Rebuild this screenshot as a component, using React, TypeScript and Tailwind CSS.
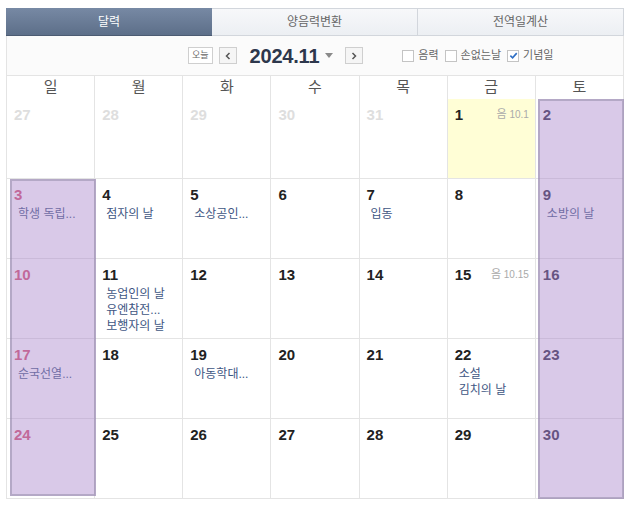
import React from "react";

type Day = {
  d: number;
  muted?: boolean;
  today?: boolean;
  lunar?: string;
  events?: string[];
};

// 2024년 11월 (앞쪽은 10월 말)
const weeks: Day[][] = [
  [
    { d: 27, muted: true },
    { d: 28, muted: true },
    { d: 29, muted: true },
    { d: 30, muted: true },
    { d: 31, muted: true },
    { d: 1, today: true, lunar: "10.1" },
    { d: 2 },
  ],
  [
    { d: 3, events: ["학생 독립..."] },
    { d: 4, events: ["점자의 날"] },
    { d: 5, events: ["소상공인..."] },
    { d: 6 },
    { d: 7, events: ["입동"] },
    { d: 8 },
    { d: 9, events: ["소방의 날"] },
  ],
  [
    { d: 10 },
    { d: 11, events: ["농업인의 날", "유엔참전...", "보행자의 날"] },
    { d: 12 },
    { d: 13 },
    { d: 14 },
    { d: 15, lunar: "10.15" },
    { d: 16 },
  ],
  [
    { d: 17, events: ["순국선열..."] },
    { d: 18 },
    { d: 19, events: ["아동학대..."] },
    { d: 20 },
    { d: 21 },
    { d: 22, events: ["소설", "김치의 날"] },
    { d: 23 },
  ],
  [
    { d: 24 },
    { d: 25 },
    { d: 26 },
    { d: 27 },
    { d: 28 },
    { d: 29 },
    { d: 30 },
  ],
];

const dayNames = ["일", "월", "화", "수", "목", "금", "토"];

function Check({ label, checked }: { label: string; checked?: boolean }) {
  return (
    <label className="flex items-center gap-[4px] text-[11px] text-[#666]">
      <span className="w-[12px] h-[12px] border border-[#c4c4c4] bg-white flex items-center justify-center">
        {checked && (
          <svg width="9" height="9" viewBox="0 0 10 10">
            <path d="M1.5 5.2 L4 7.6 L8.6 2.4" stroke="#2f6fc4" strokeWidth="1.8" fill="none" />
          </svg>
        )}
      </span>
      {label}
    </label>
  );
}

export default function App() {
  return (
    <div
      className="w-[633px] h-[509px] bg-white pt-[8px] pl-[6px]"
      style={{ fontFamily: '"Liberation Sans", "Noto Sans CJK KR", sans-serif' }}
    >
      <div className="w-[618px]">
        {/* 탭 */}
        <div className="grid grid-cols-3 h-[28px] text-[12px]">
          <div className="flex items-center justify-center text-white bg-gradient-to-b from-[#7789a4] to-[#5d6f89] border-b border-[#4c5b72]">
            달력
          </div>
          <div className="flex items-center justify-center text-[#666] bg-gradient-to-b from-[#f7f8fa] to-[#eceff3] border border-l-0 border-[#d2d6dc]">
            양음력변환
          </div>
          <div className="flex items-center justify-center text-[#666] bg-gradient-to-b from-[#f7f8fa] to-[#eceff3] border border-l-0 border-[#d2d6dc]">
            전역일계산
          </div>
        </div>

        {/* 툴바 */}
        <div className="h-[39px] bg-[#fbfbfb] border-l border-r border-[#e4e4e4] flex items-center pl-[181px]">
          <button className="h-[17px] px-[3px] border border-[#cfcfcf] bg-white text-[9px] text-[#666] leading-none">
            오늘
          </button>
          <button className="ml-[6px] w-[18px] h-[17px] border border-[#cfcfcf] bg-[#f5f5f5] flex items-center justify-center">
            <svg width="6" height="8" viewBox="0 0 6 8">
              <path d="M4.5 1 L1.5 4 L4.5 7" stroke="#555" strokeWidth="1.5" fill="none" />
            </svg>
          </button>
          <span className="ml-[13px] text-[20px] font-bold text-[#2d374c] tracking-[-0.2px]">2024.11</span>
          <svg className="ml-[6px]" width="8" height="5" viewBox="0 0 8 5">
            <path d="M0 0 H8 L4 5 Z" fill="#8a8a8a" />
          </svg>
          <button className="ml-[12px] w-[18px] h-[17px] border border-[#cfcfcf] bg-[#f5f5f5] flex items-center justify-center">
            <svg width="6" height="8" viewBox="0 0 6 8">
              <path d="M1.5 1 L4.5 4 L1.5 7" stroke="#555" strokeWidth="1.5" fill="none" />
            </svg>
          </button>
          <div className="ml-[39px] flex items-center gap-[6px]">
            <Check label="음력" />
            <Check label="손없는날" />
            <Check label="기념일" checked />
          </div>
        </div>

        {/* 요일 */}
        <div className="grid grid-cols-7 h-[24px] border-t border-l border-[#e4e4e4]">
          {dayNames.map((n) => (
            <div
              key={n}
              className="flex items-center justify-center text-[15px] text-[#555] border-r border-b border-[#e4e4e4]"
            >
              {n}
            </div>
          ))}
        </div>

        {/* 날짜 */}
        <div className="relative border-l border-[#e4e4e4]">
          {weeks.map((w, wi) => (
            <div key={wi} className="grid grid-cols-7 h-[80px]">
              {w.map((day, di) => {
                const color = day.muted
                  ? "text-[#dedede]"
                  : di === 0
                  ? "text-[#d4506f]"
                  : di === 6
                  ? "text-[#2e2a45]"
                  : "text-[#222]";
                return (
                  <div
                    key={di}
                    className={`border-r border-b border-[#e4e4e4] pt-[6px] pl-[7px] pr-[6px] ${
                      day.today ? "bg-[#fffed6]" : "bg-white"
                    }`}
                  >
                    <div className="flex items-start justify-between">
                      <span className={`text-[15px] font-bold leading-[20px] ${color}`}>{day.d}</span>
                      {day.lunar && (
                        <span className="text-[10px] text-[#aaa] leading-[18px]">
                          <span className="text-[11px]">음</span> {day.lunar}
                        </span>
                      )}
                    </div>
                    {day.events && (
                      <div className="pl-[4px] mt-[1px] text-[12px] leading-[16px] text-[#3e5683]">
                        {day.events.map((e) => (
                          <div key={e}>{e}</div>
                        ))}
                      </div>
                    )}
                  </div>
                );
              })}
            </div>
          ))}

          {/* 선택 영역 */}
          <div className="absolute left-[3px] top-[80px] w-[86px] h-[317px] bg-[rgba(170,135,205,0.45)] border-2 border-[rgba(150,140,170,0.55)]" />
          <div className="absolute left-[531px] top-[0px] w-[86px] h-[400px] bg-[rgba(170,135,205,0.45)] border-2 border-[rgba(150,140,170,0.55)]" />
        </div>
      </div>
    </div>
  );
}
